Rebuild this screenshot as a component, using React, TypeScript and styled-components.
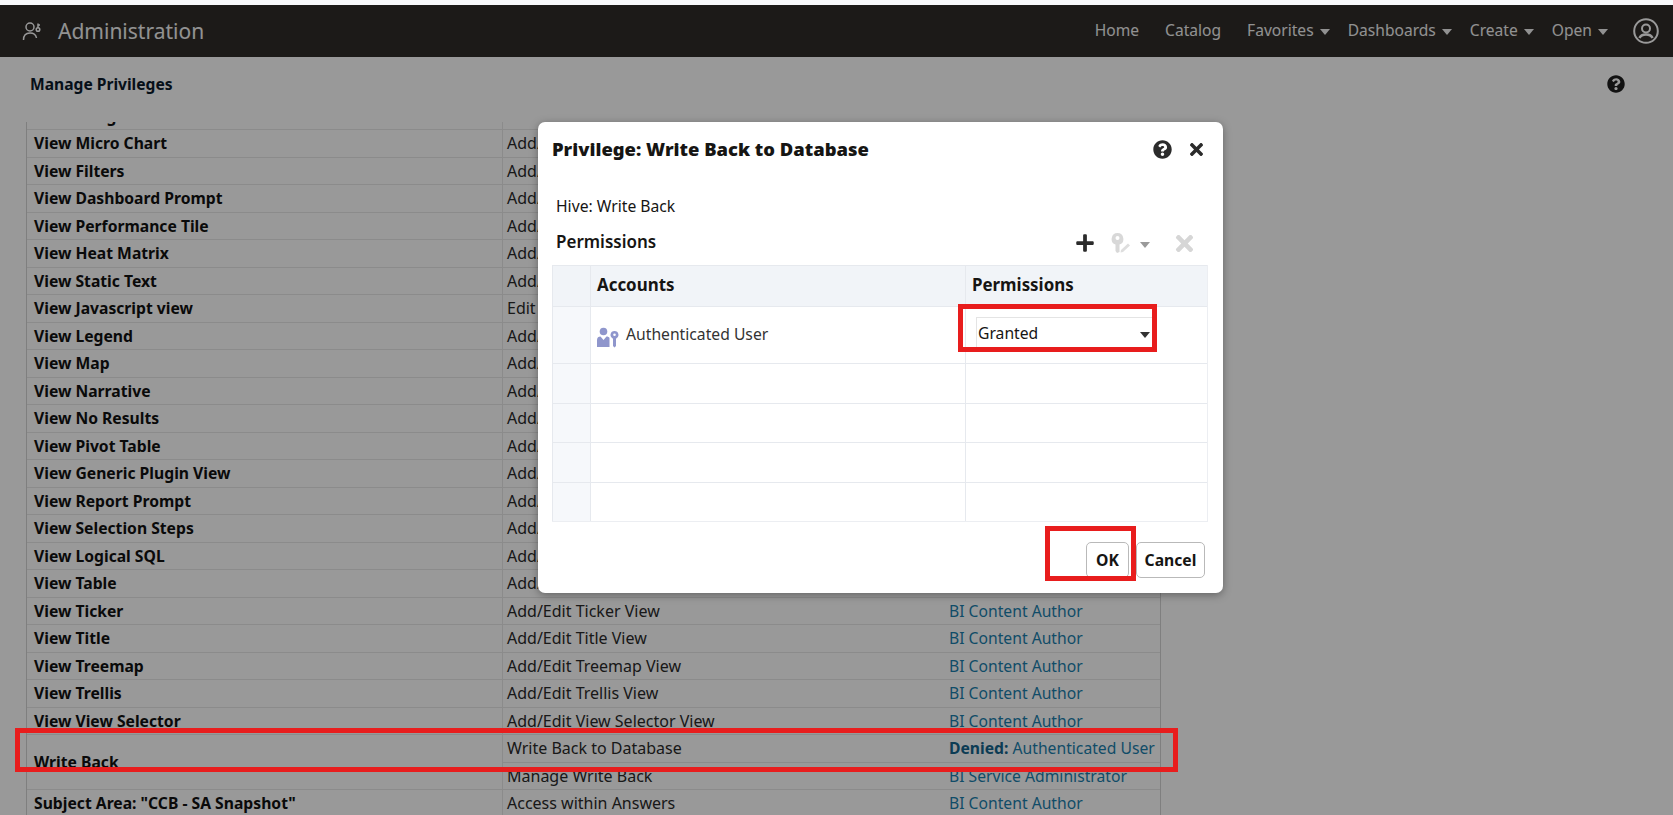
import React from 'react';
import styled, { createGlobalStyle } from 'styled-components';
import { FaPlus, FaQuestionCircle, FaTimes } from 'react-icons/fa';

const GlobalStyle = createGlobalStyle`
  html, body {
    margin: 0;
    padding: 0;
    background: #fff;
    overflow: hidden;
  }
  body {
    font-family: "Noto Sans", "Open Sans", Arial, sans-serif;
    font-size: 15.7px;
    color: #111;
  }
`;

const Root = styled.div`
  position: relative;
  width: 1673px;
  height: 815px;
  padding-top: 5px;
  box-sizing: border-box;
  overflow: hidden;
  background: #f8f9fb;
`;

const Shell = styled.div`
  display: flex;
  flex-direction: column;
  height: 810px;
  background: #fff;
`;

const Header = styled.header`
  display: flex;
  align-items: center;
  flex: none;
  height: 52px;
  padding: 0 14px 0 22px;
  background: #2f2c29;
  color: #fff;
`;

const AppTitle = styled.div`
  margin-left: 16px;
  font-size: 21px;
  color: #f4f4f4;
`;

const Nav = styled.nav`
  display: flex;
  align-items: center;
  gap: 18px;
  margin-left: auto;
`;

const NavItem = styled.div<{ $plain?: boolean }>`
  display: flex;
  align-items: center;
  gap: 6px;
  margin-right: ${(p) => (p.$plain ? '8px' : '0')};
  padding-bottom: 2px;
  font-size: 15.6px;
  color: #f2f2f2;
`;

const Caret = styled.span<{ $color?: string }>`
  display: inline-block;
  width: 0;
  height: 0;
  margin-top: 3px;
  border-left: 5px solid transparent;
  border-right: 5px solid transparent;
  border-top: 6px solid ${(p) => p.$color || '#f2f2f2'};
`;

const Avatar = styled.svg`
  width: 26px;
  height: 26px;
  margin-left: 7px;
  color: #fff;
`;

const TitleBar = styled.div`
  display: flex;
  align-items: center;
  flex: none;
  height: 65px;
  padding: 0 48px 12px 30px;
  box-sizing: border-box;
  color: #222;
`;

const PageTitle = styled.h1`
  margin: 0;
  font-size: 15.6px;
  font-weight: 700;
  color: #0b1a2b;
`;

const PageHelp = styled.div`
  display: flex;
  margin-left: auto;
  font-size: 18px;
  color: #1f1f1f;
`;

const TableWrap = styled.div`
  flex: 1;
  width: 1135px;
  margin-left: 26px;
  overflow: hidden;
  border-left: 1px solid #d4d4d4;
  border-right: 1px solid #d4d4d4;
  box-sizing: border-box;
`;

const Row = styled.div`
  display: grid;
  grid-template-columns: 476px 1fr;
  border-bottom: 1px solid #e8e8e8;
`;

const ClippedRow = styled(Row)`
  height: 8px;
  box-sizing: border-box;
  grid-template-rows: 7px;
  align-items: end;
  overflow: hidden;
`;

const NameCell = styled.div`
  display: flex;
  align-items: center;
  padding-left: 7px;
  border-right: 1px solid #e8e8e8;
  font-weight: 700;
  color: #111;
  white-space: nowrap;
`;

const ClippedName = styled(NameCell)`
  height: 26.5px;
`;

const SubRow = styled.div`
  display: grid;
  grid-template-columns: 446px 1fr;
  align-items: center;
  height: 26.5px;
  white-space: nowrap;
`;

const DividedSubRow = styled(SubRow)`
  height: 27.5px;
  box-sizing: border-box;
  border-bottom: 1px solid #e8e8e8;
`;

const TaskCell = styled.div`
  padding-left: 4px;
  font-size: 16px;
  color: #2a2a2a;
`;

const RoleCell = styled.div`
  color: #1b7fae;
`;

const RoleLabel = styled.b`
  color: #14648c;
`;

const Backdrop = styled.div`
  position: absolute;
  inset: 5px 0 0 0;
  background: rgba(0, 0, 0, 0.4);
`;

const Modal = styled.section`
  position: absolute;
  left: 538px;
  top: 122px;
  display: flex;
  flex-direction: column;
  width: 685px;
  height: 471px;
  box-sizing: border-box;
  padding: 0 0 0 14px;
  border-radius: 7px;
  background: #fff;
  box-shadow: 0 2px 8px rgba(0, 0, 0, 0.35);
`;

const ModalHead = styled.div`
  display: flex;
  align-items: center;
  height: 54px;
  padding-right: 17px;
`;

const ModalTitle = styled.h2`
  margin: 0 0 2px;
  font-size: 18.4px;
  font-weight: 900;
  color: #161513;
`;

const ModalIcons = styled.div`
  display: flex;
  align-items: center;
  gap: 15px;
  margin-left: auto;
  color: #2b2b2b;
`;

const HiveLine = styled.div`
  margin: 20px 0 0 4px;
  height: 20px;
  line-height: 20px;
  color: #161513;
`;

const PermBar = styled.div`
  display: flex;
  align-items: center;
  height: 30px;
  margin-top: 10px;
  padding: 0 26px 0 4px;
`;

const PermTitle = styled.div`
  font-size: 17px;
  font-weight: 600;
  color: #161513;
`;

const PermTools = styled.div`
  display: flex;
  align-items: center;
  margin-left: auto;
  padding-top: 4px;
`;

const PlusButton = styled.span`
  display: flex;
  font-size: 20px;
  color: #2b2b2b;
  margin-right: 16px;
`;

const KeyEdit = styled.svg`
  width: 20px;
  height: 20px;
  margin-right: 9px;
`;

const RemoveButton = styled.span`
  display: flex;
  font-size: 25px;
  color: #d6d6d6;
  margin-left: 22px;
`;

const Grid = styled.div`
  display: grid;
  grid-template-columns: 38px 375px 1fr;
  grid-template-rows: 41px 57px 40px 39px 40px 39px;
  width: 656px;
  margin-top: 9px;
  box-sizing: border-box;
  border-right: 1px solid #eceef2;
  border-bottom: 1px solid #eceef2;
`;

const GridCell = styled.div<{ $tone?: 'head' | 'gutter' }>`
  display: flex;
  align-items: center;
  box-sizing: border-box;
  padding-left: 6px;
  border-top: 1px solid #e6e9ee;
  border-left: 1px solid #e6e9ee;
  background: ${(p) => (p.$tone === 'head' ? '#f1f4f8' : p.$tone === 'gutter' ? '#f6f8fb' : '#fff')};
`;

const HeadLabel = styled.span`
  margin-bottom: 3px;
  font-size: 16.9px;
  font-weight: 700;
  color: #161513;
`;

const AccountIcon = styled.svg`
  width: 22px;
  height: 22px;
  margin-right: 7px;
  margin-top: 3px;
`;

const AccountName = styled.span`
  margin-bottom: 2px;
  color: #333;
`;

const SelectBox = styled.div`
  display: flex;
  align-self: flex-start;
  align-items: center;
  justify-content: space-between;
  width: 180px;
  height: 31px;
  margin: 10px 0 0 4px;
  padding: 0 6px 0 1px;
  box-sizing: border-box;
  border-top: 1px solid #e4e4e4;
  border-left: 1px solid #e4e4e4;
  color: #161513;
`;

const Footer = styled.div`
  display: flex;
  justify-content: flex-end;
  gap: 7px;
  margin-top: 20px;
  padding-right: 18px;
`;

const Button = styled.button`
  height: 36px;
  padding: 0;
  border: 1px solid #b9b9b9;
  border-radius: 5px;
  background: #fff;
  font-family: inherit;
  font-size: 15.7px;
  font-weight: 700;
  color: #161513;
`;

const OkButton = styled(Button)`
  width: 43px;
`;

const CancelButton = styled(Button)`
  width: 69px;
`;

const Callout = styled.div<{ $x: number; $y: number; $w: number; $h: number }>`
  position: absolute;
  left: ${(p) => p.$x}px;
  top: ${(p) => p.$y}px;
  width: ${(p) => p.$w}px;
  height: ${(p) => p.$h}px;
  box-sizing: border-box;
  border: 5px solid #e81d1d;
`;

const ROWS: [string, string][] = [
  ['View Micro Chart', 'Add/Edit Micro Chart View'],
  ['View Filters', 'Add/Edit Filters View'],
  ['View Dashboard Prompt', 'Add/Edit Dashboard Prompt View'],
  ['View Performance Tile', 'Add/Edit Performance Tile View'],
  ['View Heat Matrix', 'Add/Edit Heat Matrix View'],
  ['View Static Text', 'Add/Edit Static Text View'],
  ['View Javascript view', 'Edit Javascript View'],
  ['View Legend', 'Add/Edit Legend View'],
  ['View Map', 'Add/Edit Map View'],
  ['View Narrative', 'Add/Edit Narrative View'],
  ['View No Results', 'Add/Edit No Results View'],
  ['View Pivot Table', 'Add/Edit Pivot Table View'],
  ['View Generic Plugin View', 'Add/Edit Generic Plugin View'],
  ['View Report Prompt', 'Add/Edit Report Prompt View'],
  ['View Selection Steps', 'Add/Edit Selection Steps View'],
  ['View Logical SQL', 'Add/Edit Logical SQL View'],
  ['View Table', 'Add/Edit Table View'],
  ['View Ticker', 'Add/Edit Ticker View'],
  ['View Title', 'Add/Edit Title View'],
  ['View Treemap', 'Add/Edit Treemap View'],
  ['View Trellis', 'Add/Edit Trellis View'],
  ['View View Selector', 'Add/Edit View Selector View'],
];

const AdminIcon = () => (
  <svg width="20" height="20" viewBox="0 0 20 20" fill="none" stroke="#fff" strokeWidth="1.5">
    <circle cx="8" cy="6" r="4" />
    <path d="M1.5 19c0-4.5 2.5-7 6.5-7s6 2 6.5 5" />
    <circle cx="16" cy="8.5" r="1.8" />
    <path d="M16 6.7V2.5M16 4h2" />
  </svg>
);

const AvatarIcon = () => (
  <Avatar viewBox="0 0 26 26" fill="none" stroke="currentColor" strokeWidth="2">
    <circle cx="13" cy="13" r="11.8" />
    <circle cx="13" cy="10.5" r="4" />
    <path d="M6.5 20c1-2.5 3.5-3.5 6.5-3.5s5.500 1 6.500 3.500" strokeWidth="2.600" />
  </Avatar>
);

const KeyEditIcon = () => (
  <KeyEdit viewBox="0 0 20 20">
    <path
      fillRule="evenodd"
      d="M6.500 0a6 6 0 0 1 2 11.600V19l-2.500 1-1.500-2v-6.400A6 6 0 0 1 6.500 0zm0 3a2 2 0 1 0 0 4 2 2 0 0 0 0-4z"
      fill="#d8d8d8"
    />
    <path d="M10 17l7-6.500 2 2-7 6.500-2.500.5z" fill="#dedede" />
  </KeyEdit>
);

const UserKeyIcon = () => (
  <AccountIcon viewBox="0 0 22 22">
    <circle cx="6.500" cy="5.500" r="3.800" fill="#8f96cc" />
    <path d="M0 21v-7c0-2.500 1.500-3.500 3.500-3.500l3 3.500 3-3.500c1.500 0 2.500.5 3 1.500V21z" fill="#8f96cc" />
    <path
      fillRule="evenodd"
      d="M17.500 5a4 4 0 0 1 1.500 7.700V20l-1.500 1.500L16 20v-7.300A4 4 0 0 1 17.500 5zm0 2.500a1.300 1.300 0 1 0 0 2.600 1.300 1.300 0 0 0 0-2.600z"
      fill="#8f96cc"
    />
  </AccountIcon>
);

const App: React.FC = () => {
  return (
    <Root>
      <GlobalStyle />
      <Shell>
        <Header>
          <AdminIcon />
          <AppTitle>Administration</AppTitle>
          <Nav>
            <NavItem $plain>Home</NavItem>
            <NavItem $plain>Catalog</NavItem>
            <NavItem>Favorites <Caret /></NavItem>
            <NavItem>Dashboards <Caret /></NavItem>
            <NavItem>Create <Caret /></NavItem>
            <NavItem>Open <Caret /></NavItem>
            <AvatarIcon />
          </Nav>
        </Header>
        <TitleBar>
          <PageTitle>Manage Privileges</PageTitle>
          <PageHelp><FaQuestionCircle /></PageHelp>
        </TitleBar>
        <TableWrap>
          <ClippedRow>
            <ClippedName>View Gauge</ClippedName>
          </ClippedRow>
          {ROWS.map(([name, task]) => (
            <Row key={name}>
              <NameCell>{name}</NameCell>
              <SubRow>
                <TaskCell>{task}</TaskCell>
                <RoleCell>BI Content Author</RoleCell>
              </SubRow>
            </Row>
          ))}
          <Row>
            <NameCell>Write Back</NameCell>
            <div>
              <DividedSubRow>
                <TaskCell>Write Back to Database</TaskCell>
                <RoleCell><RoleLabel>Denied:</RoleLabel> Authenticated User</RoleCell>
              </DividedSubRow>
              <SubRow>
                <TaskCell>Manage Write Back</TaskCell>
                <RoleCell>BI Service Administrator</RoleCell>
              </SubRow>
            </div>
          </Row>
          <Row>
            <NameCell>Subject Area: "CCB - SA Snapshot"</NameCell>
            <SubRow>
              <TaskCell>Access within Answers</TaskCell>
              <RoleCell>BI Content Author</RoleCell>
            </SubRow>
          </Row>
        </TableWrap>
      </Shell>
      <Backdrop />
      <Modal>
        <ModalHead>
          <ModalTitle>Privilege: Write Back to Database</ModalTitle>
          <ModalIcons>
            <FaQuestionCircle size={19} />
            <FaTimes size={19} />
          </ModalIcons>
        </ModalHead>
        <HiveLine>Hive: Write Back</HiveLine>
        <PermBar>
          <PermTitle>Permissions</PermTitle>
          <PermTools>
            <PlusButton><FaPlus /></PlusButton>
            <KeyEditIcon />
            <Caret $color="#9a9a9a" />
            <RemoveButton><FaTimes /></RemoveButton>
          </PermTools>
        </PermBar>
        <Grid>
          <GridCell $tone="head" />
          <GridCell $tone="head"><HeadLabel>Accounts</HeadLabel></GridCell>
          <GridCell $tone="head"><HeadLabel>Permissions</HeadLabel></GridCell>
          <GridCell $tone="gutter" />
          <GridCell>
            <UserKeyIcon />
            <AccountName>Authenticated User</AccountName>
          </GridCell>
          <GridCell>
            <SelectBox>
              Granted
              <Caret $color="#333" />
            </SelectBox>
          </GridCell>
          {[0, 1, 2, 3].map((i) => (
            <React.Fragment key={i}>
              <GridCell $tone="gutter" />
              <GridCell />
              <GridCell />
            </React.Fragment>
          ))}
        </Grid>
        <Footer>
          <OkButton>OK</OkButton>
          <CancelButton>Cancel</CancelButton>
        </Footer>
      </Modal>
      <Callout $x={15} $y={728} $w={1163} $h={44} />
      <Callout $x={958} $y={304} $w={199} $h={48} />
      <Callout $x={1045} $y={526} $w={91} $h={55} />
    </Root>
  );
};

export default App;
